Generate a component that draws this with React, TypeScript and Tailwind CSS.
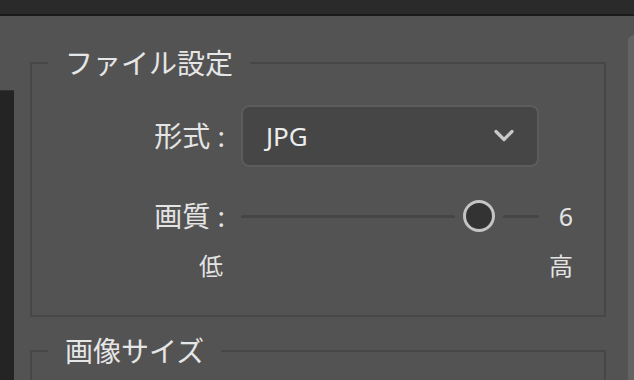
import React from "react";

const font = { fontFamily: '"Noto Sans", "Noto Sans CJK JP", sans-serif' };

export default function App() {
  return (
    <div
      className="w-[634px] h-[380px] bg-[#535353] overflow-hidden flex flex-col text-[#e4e4e4]"
      style={font}
    >
      <div className="h-[16px] shrink-0 bg-[#2a2a2a] border-b-2 border-[#1b1b1b]" />
      <div className="flex flex-1 min-h-0">
        <div className="w-[14px] shrink-0 mt-[74px] bg-[#242424] border-t border-[#333333]" />
        <div className="flex-1 pl-[16px] pt-[33px]">
          <fieldset className="w-[576px] border-2 border-[#474747] pl-[16px] pb-[33px]">
            <legend className="px-[17px] text-[28px] leading-[28px] text-[#e6e6e6]">
              ファイル設定
            </legend>
            <div className="flex items-center mt-[28px]">
              <div className="w-[177px] shrink-0 text-right text-[28px] leading-[32px]">形式 :</div>
              <div className="ml-4 w-[298px] h-[62px] shrink-0 rounded-[8px] border-2 border-[#5c5c5c] bg-[#464646] flex items-center justify-between pl-[23px] pr-[23px]">
                <span className="text-[26px] leading-[30px] text-[#ececec]">JPG</span>
                <svg width="20" height="14" viewBox="0 0 20 14" fill="none">
                  <polyline
                    points="2,2.5 10,10.5 18,2.5"
                    stroke="#c8c8c8"
                    strokeWidth="3.2"
                    strokeLinecap="round"
                    strokeLinejoin="round"
                  />
                </svg>
              </div>
            </div>
            <div className="flex items-center mt-[33px]">
              <div className="w-[177px] shrink-0 text-right text-[28px] leading-[32px]">画質 :</div>
              <div className="ml-4 w-[298px] h-[32px] shrink-0 flex items-center">
                <div className="w-[214px] h-[3px] rounded-full bg-[#464646]" />
                <div className="mx-2 w-[32px] h-[32px] rounded-full border-[3px] border-[#c4c4c4] bg-[#333333]" />
                <div className="flex-1 h-[3px] rounded-full bg-[#464646]" />
              </div>
              <div className="w-[34px] text-right text-[25px] leading-[32px]">6</div>
            </div>
            <div className="flex items-center mt-[18px]">
              <div className="w-[175px] shrink-0 text-right text-[24px] leading-[32px]">低</div>
              <div className="ml-[18px] w-[298px] shrink-0" />
              <div className="w-[34px] flex justify-end text-[24px] leading-[32px] whitespace-nowrap">高</div>
            </div>
          </fieldset>
          <fieldset className="mt-[20px] w-[576px] h-[80px] border-2 border-[#474747] pl-[16px]">
            <legend className="px-[17px] text-[28px] leading-[28px] text-[#e6e6e6]">
              画像サイズ
            </legend>
          </fieldset>
        </div>
        <div className="w-[6px] shrink-0 mt-[19px] bg-[#636363] rounded-tl-[8px]" />
      </div>
    </div>
  );
}
